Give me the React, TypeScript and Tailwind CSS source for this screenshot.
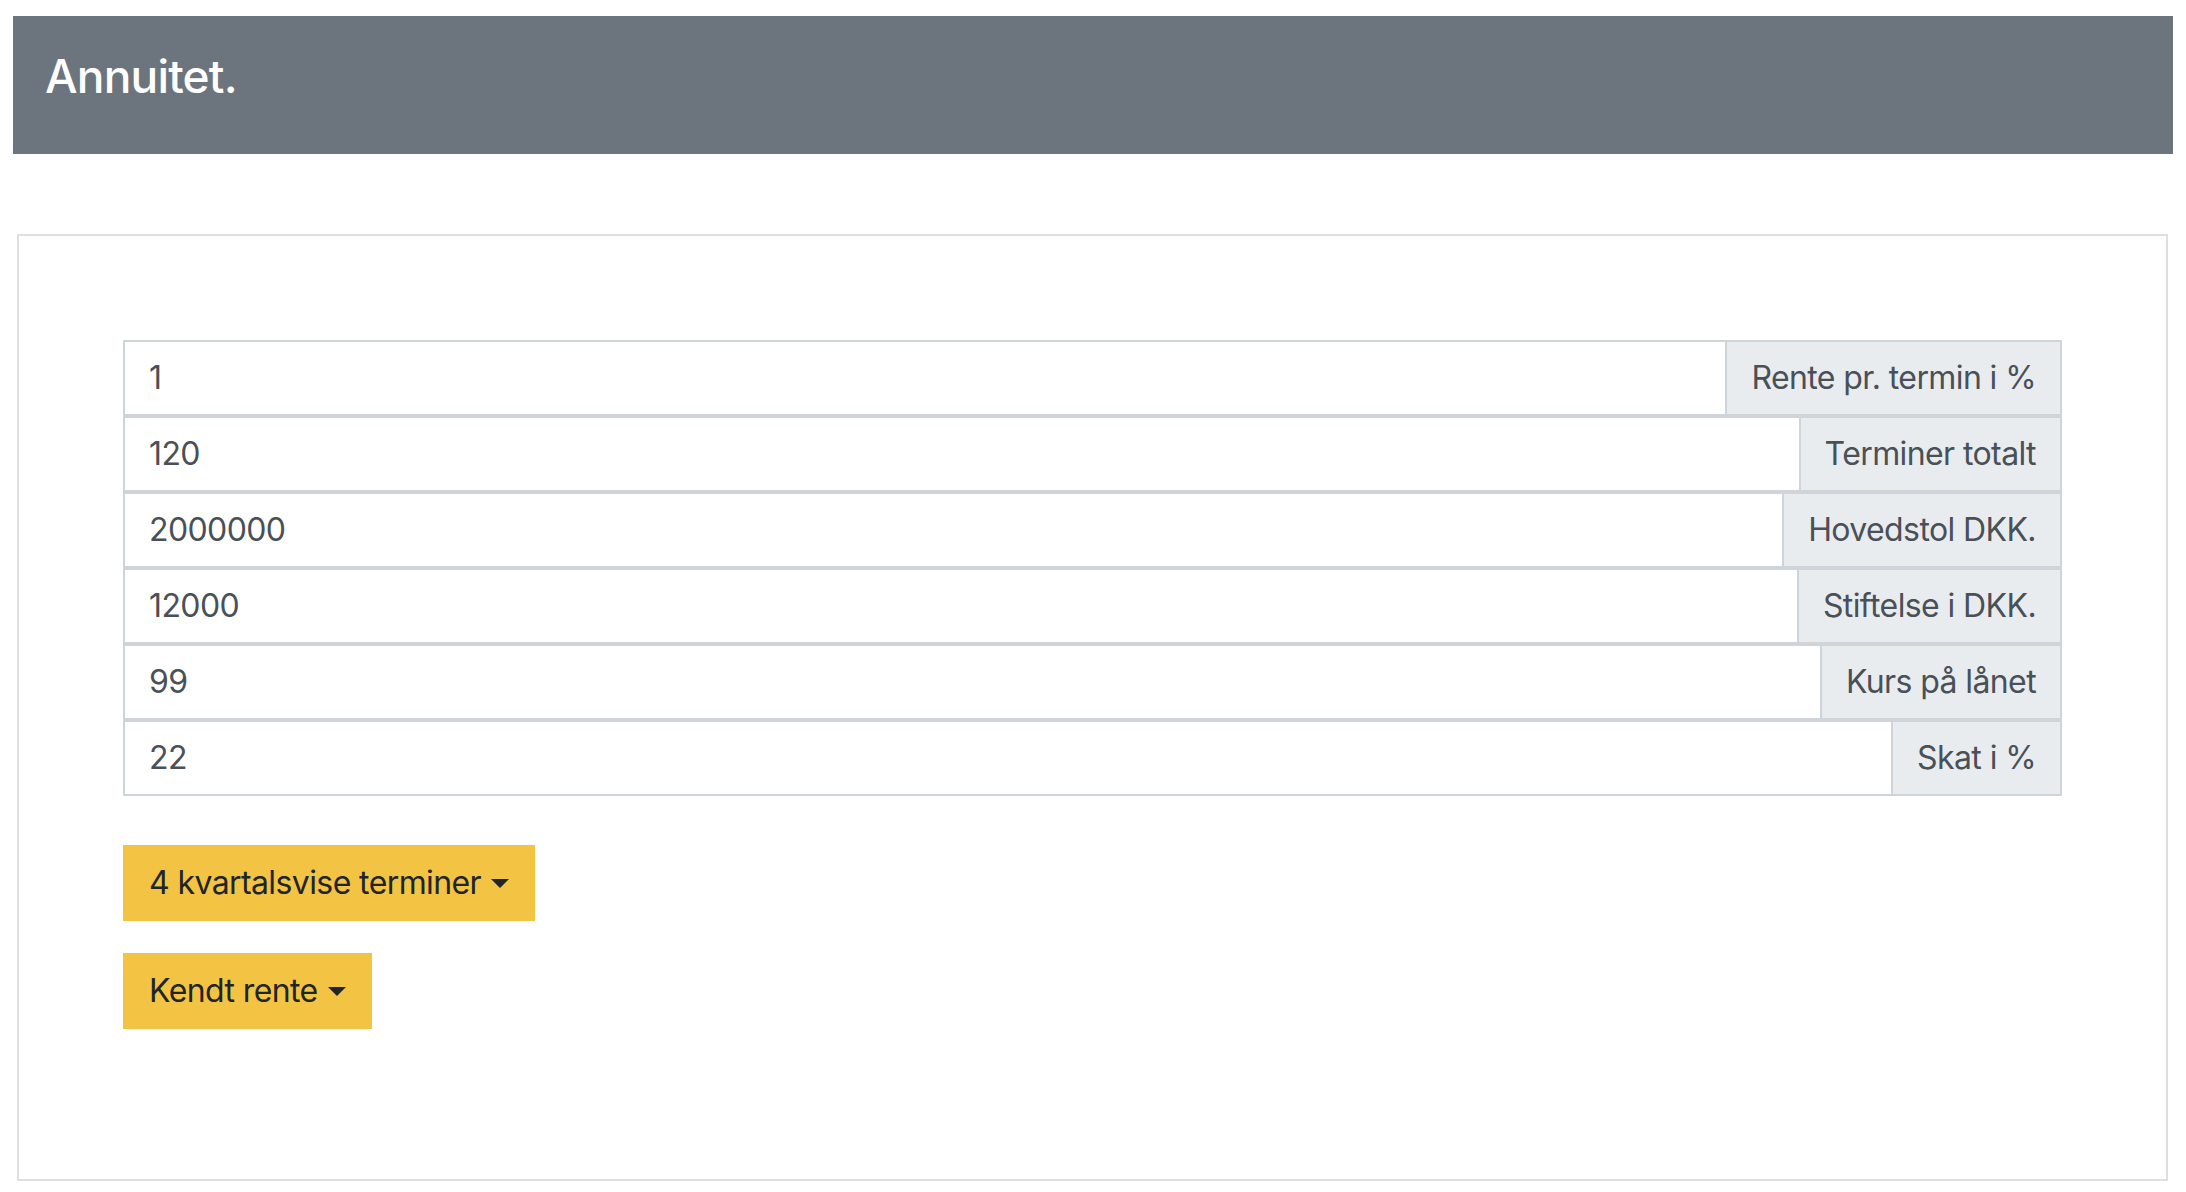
const rows = [
  { value: "1", label: "Rente pr. termin i %" },
  { value: "120", label: "Terminer totalt" },
  { value: "2000000", label: "Hovedstol DKK." },
  { value: "12000", label: "Stiftelse i DKK." },
  { value: "99", label: "Kurs på lånet" },
  { value: "22", label: "Skat i %" },
];

function Caret() {
  return (
    <span className="ml-[10px] inline-block h-0 w-0 border-x-[9px] border-t-[9px] border-x-transparent border-t-[#212529] align-[6px]" />
  );
}

export default function App() {
  return (
    <div className="min-h-screen bg-white font-['Inter','Liberation_Sans',sans-serif]">
      <div className="pt-[16px] px-[13px]">
        <header className="h-[138px] bg-[#6c757d] pl-[32px] pt-[33px]">
          <h1 className="text-[46px] leading-[55px] font-medium text-white tracking-[-0.8px]">Annuitet.</h1>
        </header>
      </div>

      <div className="mt-[80px] ml-[17px] mr-[18px] h-[947px] border-2 border-[#dfdfdf] px-[104px] pt-[104px]">
        <div className="flex flex-col">
          {rows.map((r) => (
            <div key={r.label} className="flex border-2 border-[#ced4da]">
              <input
                defaultValue={r.value}
                className="min-w-0 flex-1 bg-white px-[24px] py-[12px] text-[32px] leading-[48px] tracking-[-0.6px] text-[#495057] outline-none"
              />
              <span className="border-l-2 border-[#ced4da] bg-[#e9ecef] px-[24px] py-[12px] text-[32px] leading-[48px] tracking-[-0.6px] text-[#495057] whitespace-nowrap">
                {r.label}
              </span>
            </div>
          ))}
        </div>

        <div className="mt-[49px] flex flex-col items-start gap-[32px]">
          <button className="bg-[#f3c443] px-[26px] py-[14px] text-[32px] leading-[48px] tracking-[-0.6px] text-[#212529]">
            4 kvartalsvise terminer
            <Caret />
          </button>
          <button className="bg-[#f3c443] px-[26px] py-[14px] text-[32px] leading-[48px] tracking-[-0.6px] text-[#212529]">
            Kendt rente
            <Caret />
          </button>
        </div>
      </div>
    </div>
  );
}
